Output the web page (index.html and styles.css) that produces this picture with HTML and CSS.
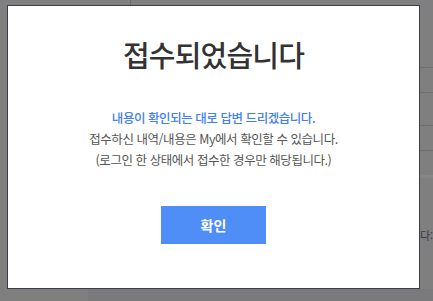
FILE: index.html
```html
<!DOCTYPE html>
<html lang="ko">
<head>
<meta charset="utf-8">
<link rel="stylesheet" href="styles.css">
</head>
<body>
<div class="page">
  <div class="topbar"><div class="top-left"></div><div class="top-right"></div></div>
  <div class="side">
    <div class="side-row"></div>
    <div class="side-row r2"></div>
    <div class="side-row r3"></div>
    <div class="side-row r4"></div>
    <div class="side-row r5"></div>
    <div class="side-text">다:</div>
  </div>
  <div class="footer"><div class="foot-left"></div><div class="foot-right"></div></div>
</div>
<div class="modal">
  <h1 class="title">접수되었습니다</h1>
  <div class="msg">
    <p class="accent">내용이 확인되는 대로 답변 드리겠습니다.</p>
    <p>접수하신 내역/내용은 My에서 확인할 수 있습니다.</p>
    <p>(로그인 한 상태에서 접수한 경우만 해당됩니다.)</p>
  </div>
  <button class="ok">확인</button>
</div>
</body>
</html>
```
FILE: styles.css
```css
html, body { margin: 0; padding: 0; }
body {
  width: 433px; height: 301px; overflow: hidden;
  background: #7f7f7f;
  font-family: "Noto Sans CJK KR", "Noto Sans", sans-serif;
  position: relative;
}
.page { width: 433px; height: 301px; position: relative; }
.topbar { height: 5px; display: flex; }
.top-left { width: 130px; border-right: 1px solid #6c6c6c; }
.side {
  position: absolute; left: 420px; top: 67px; width: 13px;
}
.side-row { height: 24px; border-top: 1px solid #6e6e6e; }
.side-row.r2 { height: 32px; }
.side-row.r3 { height: 24px; }
.side-row.r4 { height: 24px; }
.side-row.r5 { height: 3px; border-top: none; background: #858585; }
.side-text { margin-top: 50px; font-size: 11px; color: #3a3a50; line-height: 14px; }
.footer { position: absolute; left: 0; top: 289px; width: 433px; height: 12px; display: flex; }
.foot-left { width: 88px; background: #7f7f7f; }
.foot-right { flex: 1; background: #7a7a7c; }

.modal {
  position: absolute; left: 7px; top: 5px;
  width: 411px; height: 282px;
  background: #fff;
  border: 1px solid #3b3d4a;
  display: flex; flex-direction: column; align-items: center;
}
.title {
  margin: 28px 0 0;
  font-size: 29px; font-weight: 500; color: #333;
  letter-spacing: -0.8px; line-height: 40px;
}
.msg { margin-top: 33px; text-align: center; }
.msg p {
  margin: 0; font-size: 12.5px; line-height: 21px; color: #555;
  letter-spacing: -0.45px;
}
.msg p.accent { color: #3f80f3; font-weight: 500; }
.ok {
  margin-top: 36px;
  width: 105px; height: 38px;
  border: none; background: #4f8df7; color: #fff;
  font-family: inherit; font-size: 14px; font-weight: 700;
}
```
